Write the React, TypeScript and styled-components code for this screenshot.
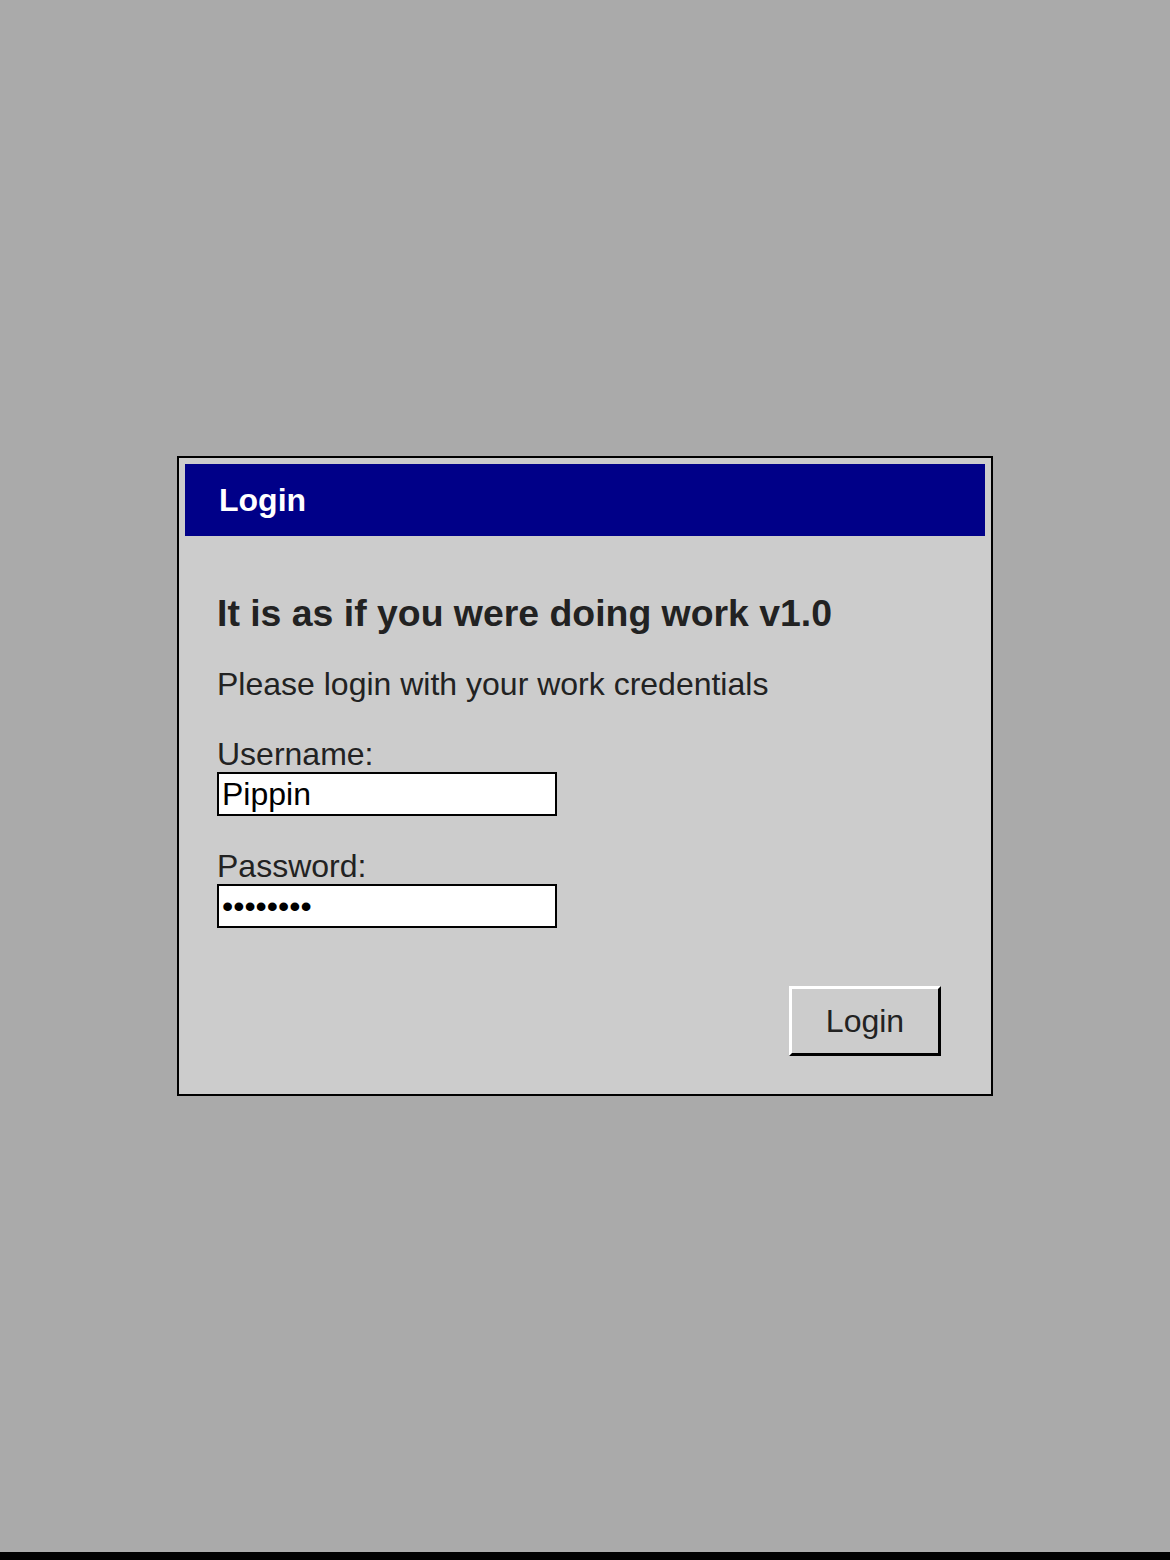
import styled, { createGlobalStyle } from "styled-components";

const GlobalStyle = createGlobalStyle`
  html, body {
    margin: 0;
    padding: 0;
    background: #aaaaaa;
    font-family: "Liberation Sans", Arial, sans-serif;
  }
`;

const Page = styled.div`
  display: flex;
  flex-direction: column;
  min-height: 100vh;
`;

const Stage = styled.main`
  flex: 1;
  display: flex;
  align-items: center;
  justify-content: center;
`;

const BottomStrip = styled.div`
  height: 8px;
  background: #000;
`;

const Dialog = styled.section`
  width: 816px;
  box-sizing: border-box;
  border: 2px solid #000;
  background: #cccccc;
  padding: 6px 6px 38px;
`;

const TitleBar = styled.header`
  height: 72px;
  background: #000088;
  color: #fff;
  display: flex;
  align-items: center;
  padding-left: 34px;
  font-size: 32px;
  font-weight: bold;
`;

const Body = styled.div`
  padding: 55px 44px 0 32px;
  color: #222;
`;

const Heading = styled.h1`
  margin: 0;
  font-size: 37.4px;
  font-weight: bold;
  line-height: 44px;
`;

const Intro = styled.p`
  margin: 29px 0 32px;
  font-size: 32px;
  line-height: 40px;
`;

const Field = styled.label<{ $gap: number }>`
  display: flex;
  flex-direction: column;
  align-items: flex-start;
  font-size: 32px;
  line-height: 36px;
  margin-bottom: ${(p) => p.$gap}px;
`;

const Input = styled.input`
  width: 340px;
  height: 44px;
  box-sizing: border-box;
  border: 2px solid #000;
  background: #fff;
  margin: 0;
  padding: 0 3px;
  font-family: "Liberation Sans", Arial, sans-serif;
  font-size: 32px;
  color: #000;
  outline: none;
`;

const Actions = styled.div`
  display: flex;
  justify-content: flex-end;
`;

const Button = styled.button`
  width: 152px;
  height: 70px;
  box-sizing: border-box;
  background: #cccccc;
  border: 3px solid;
  border-color: #fff #000 #000 #fff;
  font-family: "Liberation Sans", Arial, sans-serif;
  font-size: 32px;
  color: #222;
  padding: 0;
`;

export default function App() {
  return (
    <Page>
      <GlobalStyle />
      <Stage>
        <Dialog>
          <TitleBar>Login</TitleBar>
          <Body>
            <Heading>It is as if you were doing work v1.0</Heading>
            <Intro>Please login with your work credentials</Intro>
            <Field $gap={32}>
              Username:
              <Input type="text" defaultValue="Pippin" />
            </Field>
            <Field $gap={58}>
              Password:
              <Input type="password" defaultValue="12345678" />
            </Field>
            <Actions>
              <Button>Login</Button>
            </Actions>
          </Body>
        </Dialog>
      </Stage>
      <BottomStrip />
    </Page>
  );
}
